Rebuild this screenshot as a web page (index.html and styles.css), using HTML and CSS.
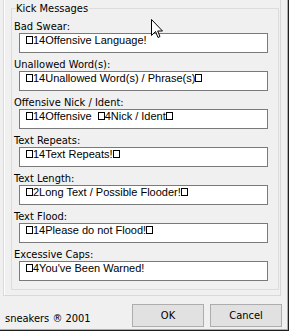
FILE: index.html
```html
<!DOCTYPE html>
<html lang="en">
<head>
  <meta charset="UTF-8">
  <meta name="viewport" content="width=device-width, initial-scale=1.0">
  <title>Kick Messages</title>
  <link rel="stylesheet" href="styles.css">
</head>
<body>
  <div class="panel">
    <fieldset class="group">
      <legend>Kick Messages</legend>

      <div class="field">
        <label>Bad Swear:</label>
        <div class="edit"><span class="cc"></span>14Offensive Language!</div>
      </div>
      <div class="field">
        <label>Unallowed Word(s):</label>
        <div class="edit"><span class="cc"></span>14Unallowed Word(s) / Phrase(s)<span class="cc"></span></div>
      </div>
      <div class="field">
        <label>Offensive Nick / Ident:</label>
        <div class="edit"><span class="cc"></span>14Offensive &nbsp;<span class="cc"></span>4Nick / Ident<span class="cc"></span></div>
      </div>
      <div class="field">
        <label>Text Repeats:</label>
        <div class="edit"><span class="cc"></span>14Text Repeats!<span class="cc"></span></div>
      </div>
      <div class="field">
        <label>Text Length:</label>
        <div class="edit"><span class="cc"></span>2Long Text / Possible Flooder!<span class="cc"></span></div>
      </div>
      <div class="field">
        <label>Text Flood:</label>
        <div class="edit"><span class="cc"></span>14Please do not Flood!<span class="cc"></span></div>
      </div>
      <div class="field">
        <label>Excessive Caps:</label>
        <div class="edit"><span class="cc"></span>4You've Been Warned!</div>
      </div>
    </fieldset>
  </div>

  <div class="bar">
    <span class="credit">sneakers ® 2001</span>
    <button class="btn">OK</button>
    <button class="btn">Cancel</button>
  </div>

  <!-- mouse pointer from the screenshot -->
  <svg class="cursor" width="13" height="20" viewBox="0 0 13 20">
    <path d="M0.5 0.5 V16.5 L4.5 12.5 L7 18.5 L9 17.5 L6.7 12 H11.5 Z" fill="#fff" stroke="#000" stroke-width="1"/>
  </svg>
</body>
</html>
```

FILE: styles.css
```css
html {
  background-color: #1f1f1f;
}
body {
  margin: 0;
  width: 287px;
  height: 329px;
  background-color: #f0f0f0;
  border-right: 1px solid #ebab0c;
  border-bottom: 1px solid #ebab0c;
  font-family: "DejaVu Sans Condensed", "DejaVu Sans", sans-serif;
  font-size: 11px;
  color: #000;
  overflow: hidden;
}
.panel {
  box-sizing: border-box;
  width: 278px;
  height: 296px;
  margin-left: 3px;
  padding: 2px 1px 0 7px;
  border: 1px solid #d9d9d9;
  border-top: none;
  box-shadow: inset 1px 0 0 #fff;
}
.group {
  margin: 0;
  padding: 0 0 8px 2px;
  border: 1px solid #dcdcdc;
  min-width: 0;
}
.group legend {
  margin-left: 2px;
  padding: 0 1px 0 0;
  line-height: 13px;
}
.field {
  display: flex;
  flex-direction: column;
}
.field label {
  display: block;
  padding-top: 5px;
  line-height: 13px;
}
.edit {
  box-sizing: border-box;
  width: 249px;
  height: 20px;
  margin-left: 5px;
  padding: 0 6px;
  background-color: #fff;
  border: 1px solid #7a7a7a;
  font-family: "Liberation Sans", Arial, sans-serif;
  font-size: 11px;
  line-height: 12px;
  white-space: nowrap;
  overflow: hidden;
}
.cc {
  display: inline-block;
  box-sizing: border-box;
  width: 7px;
  height: 8px;
  border: 1px solid #000;
}
.bar {
  display: flex;
  align-items: flex-start;
  gap: 6px;
  padding: 8px 5px 0 5px;
}
.credit {
  margin-top: 7px;
  margin-right: auto;
  line-height: 15px;
}
.btn {
  box-sizing: border-box;
  width: 72px;
  height: 23px;
  padding: 0;
  background-color: #e1e1e1;
  border: 1px solid #adadad;
  font-family: inherit;
  font-size: 11px;
  line-height: 15px;
  color: #000;
}
.cursor {
  position: absolute;
  left: 151px;
  top: 19px;
}
```
